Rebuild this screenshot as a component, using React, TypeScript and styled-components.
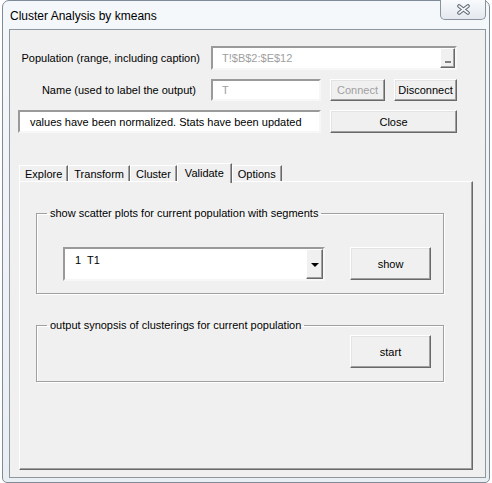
import styled, { createGlobalStyle } from 'styled-components';

const GlobalStyle = createGlobalStyle`
  html, body {
    margin: 0;
    padding: 0;
    background: #ffffff;
  }
  body {
    font-family: "Liberation Sans", Arial, sans-serif;
    font-size: 11px;
    color: #000;
  }
`;

// ウィンドウ枠 (Aero風)
const Window = styled.div`
  box-sizing: border-box;
  width: 488px;
  height: 483px;
  margin-left: 2px;
  border: 1px solid #7f8b97;
  border-radius: 7px 7px 5px 5px;
  background: linear-gradient(180deg, #f5f8fb 0%, #e9eef3 100%);
  display: flex;
  flex-direction: column;
`;

const TitleBar = styled.div`
  height: 28px;
  display: flex;
  justify-content: space-between;
  align-items: flex-start;
`;

const Title = styled.div`
  font-size: 12px;
  line-height: 14px;
  padding: 8px 0 0 7px;
  color: #000;
`;

const CloseButton = styled.div`
  box-sizing: border-box;
  width: 46px;
  height: 20px;
  margin: -1px 3px 0 0;
  border: 1px solid #8a929b;
  border-top: none;
  border-radius: 0 0 5px 5px;
  background: linear-gradient(180deg, #f8fafc 0%, #e4e9ef 100%);
  display: flex;
  align-items: center;
  justify-content: center;
`;

const Client = styled.div`
  flex: 1;
  margin: 0 3px 4px 6px;
  border: 1px solid #8e969e;
  background: #f0f0f0;
  display: flex;
  flex-direction: column;
`;

const TopGrid = styled.div`
  display: grid;
  grid-template-columns: 184px 110px 55px 63px;
  grid-template-rows: 24px 22px 23px;
  column-gap: 9px;
  row-gap: 9px;
  padding: 16px 0 0 8px;
`;

const Label = styled.div<{ $pad: number }>`
  display: flex;
  align-items: center;
  justify-content: flex-end;
  padding-right: ${p => p.$pad}px;
  white-space: nowrap;
`;

const TextField = styled.div<{ $span?: string; $muted?: boolean }>`
  box-sizing: border-box;
  grid-column: ${p => p.$span || 'auto'};
  display: flex;
  align-items: center;
  background: #fff;
  border: 2px solid;
  border-color: #9a9a9a #f7f7f7 #f7f7f7 #9a9a9a;
  color: ${p => (p.$muted ? '#a0a0a0' : '#000')};
  white-space: nowrap;
  overflow: hidden;
`;

const FieldText = styled.span<{ $indent: number }>`
  flex: 1;
  padding-left: ${p => p.$indent}px;
`;

const BrowseButton = styled.div`
  box-sizing: border-box;
  width: 15px;
  align-self: stretch;
  background: #f0f0f0;
  border: 1px solid;
  border-color: #ffffff #696969 #696969 #ffffff;
  box-shadow: inset -1px -1px #a0a0a0;
  display: flex;
  align-items: flex-end;
  justify-content: center;
  padding-bottom: 4px;
`;

const BrowseDash = styled.span`
  width: 6px;
  height: 2px;
  background: #808080;
`;

const Button = styled.div<{ $span?: string; $disabled?: boolean; $w?: number; $h?: number }>`
  box-sizing: border-box;
  grid-column: ${p => p.$span || 'auto'};
  width: ${p => (p.$w ? `${p.$w}px` : 'auto')};
  height: ${p => (p.$h ? `${p.$h}px` : 'auto')};
  background: #f0f0f0;
  border: 1px solid;
  border-color: #ffffff #696969 #696969 #ffffff;
  box-shadow: inset -1px -1px #a0a0a0, inset 1px 1px #e3e3e3;
  display: flex;
  align-items: center;
  justify-content: center;
  color: ${p => (p.$disabled ? '#a0a0a0' : '#000')};
  white-space: nowrap;
`;

const MultiPage = styled.div`
  margin: 30px 0 0 9px;
  width: 454px;
  display: flex;
  flex-direction: column;
`;

const TabStrip = styled.div`
  display: flex;
  align-items: flex-end;
  height: 18px;
  position: relative;
  z-index: 1;
`;

const Tab = styled.div<{ $active?: boolean }>`
  box-sizing: border-box;
  height: ${p => (p.$active ? 20 : 16)}px;
  margin-bottom: ${p => (p.$active ? -2 : 0)}px;
  padding: 0 ${p => (p.$active ? 7 : 5)}px ${p => (p.$active ? 2 : 0)}px;
  background: #f0f0f0;
  border-top: 1px solid #ffffff;
  border-left: 1px solid #ffffff;
  border-right: 1px solid #696969;
  box-shadow: inset -1px 0 #a0a0a0;
  display: flex;
  align-items: center;
  white-space: nowrap;
`;

const Page = styled.div`
  box-sizing: border-box;
  height: 289px;
  border: 1px solid;
  border-color: #ffffff #696969 #696969 #ffffff;
  box-shadow: inset -1px -1px #a0a0a0;
  background: #f0f0f0;
  padding: 25px 0 0 16px;
  display: flex;
  flex-direction: column;
  gap: 25px;
`;

const Frame = styled.fieldset`
  box-sizing: border-box;
  width: 408px;
  margin: 0;
  padding: 0;
  border: 1px solid #a0a0a0;
  box-shadow: 1px 1px 0 #ffffff, inset 1px 1px 0 #ffffff;
`;

const Caption = styled.legend`
  margin-left: 10px;
  padding: 0 3px;
  line-height: 13px;
  font-size: 11px;
`;

const FrameRow = styled.div<{ $top: number; $bottom: number; $left: number }>`
  display: flex;
  justify-content: ${p => (p.$left ? 'space-between' : 'flex-end')};
  align-items: flex-start;
  padding: ${p => p.$top}px 12px ${p => p.$bottom}px ${p => p.$left}px;
`;

const Combo = styled.div`
  box-sizing: border-box;
  width: 262px;
  height: 34px;
  display: flex;
  background: #fff;
  border: 2px solid;
  border-color: #9a9a9a #f7f7f7 #f7f7f7 #9a9a9a;
`;

const ComboText = styled.div`
  flex: 1;
  padding: 5px 0 0 10px;
  white-space: pre;
`;

const ComboArrow = styled.div`
  box-sizing: border-box;
  width: 17px;
  background: #f0f0f0;
  border: 1px solid;
  border-color: #ffffff #696969 #696969 #ffffff;
  box-shadow: inset -1px -1px #a0a0a0;
  display: flex;
  align-items: center;
  justify-content: center;
`;

const Arrow = styled.span`
  width: 0;
  height: 0;
  border-left: 4px solid transparent;
  border-right: 4px solid transparent;
  border-top: 4px solid #000;
  margin-top: 2px;
`;

const tabs = ['Explore', 'Transform', 'Cluster', 'Validate', 'Options'];

export default function App() {
  return (
    <>
      <GlobalStyle />
      <Window>
        <TitleBar>
          <Title>Cluster Analysis by kmeans</Title>
          <CloseButton>
            <svg width="13" height="11" viewBox="0 0 13 11">
              <path d="M2 2 L11 9 M11 2 L2 9" stroke="#5d6671" strokeWidth="3.6" strokeLinecap="round" />
              <path d="M2 2 L11 9 M11 2 L2 9" stroke="#f4f6f8" strokeWidth="1.6" strokeLinecap="round" />
            </svg>
          </CloseButton>
        </TitleBar>
        <Client>
          <TopGrid>
            <Label $pad={2}>Population (range, including caption)</Label>
            <TextField $span="2 / 5" $muted>
              <FieldText $indent={9}>T!$B$2:$E$12</FieldText>
              <BrowseButton>
                <BrowseDash />
              </BrowseButton>
            </TextField>

            <Label $pad={6}>Name (used to label the output)</Label>
            <TextField $muted>
              <FieldText $indent={9}>T</FieldText>
            </TextField>
            <Button $disabled>Connect</Button>
            <Button>Disconnect</Button>

            <TextField $span="1 / 3">
              <FieldText $indent={10}>values have been normalized. Stats have been updated</FieldText>
            </TextField>
            <Button $span="3 / 5">Close</Button>
          </TopGrid>

          <MultiPage>
            <TabStrip>
              {tabs.map(t => (
                <Tab key={t} $active={t === 'Validate'}>
                  {t}
                </Tab>
              ))}
            </TabStrip>
            <Page>
              <Frame>
                <Caption>show scatter plots for current population with segments</Caption>
                <FrameRow $top={27} $bottom={12} $left={26}>
                  <Combo>
                    <ComboText>1  T1</ComboText>
                    <ComboArrow>
                      <Arrow />
                    </ComboArrow>
                  </Combo>
                  <Button $w={81} $h={33}>show</Button>
                </FrameRow>
              </Frame>
              <Frame>
                <Caption>output synopsis of clusterings for current population</Caption>
                <FrameRow $top={3} $bottom={13} $left={0}>
                  <Button $w={81} $h={33}>start</Button>
                </FrameRow>
              </Frame>
            </Page>
          </MultiPage>
        </Client>
      </Window>
    </>
  );
}
